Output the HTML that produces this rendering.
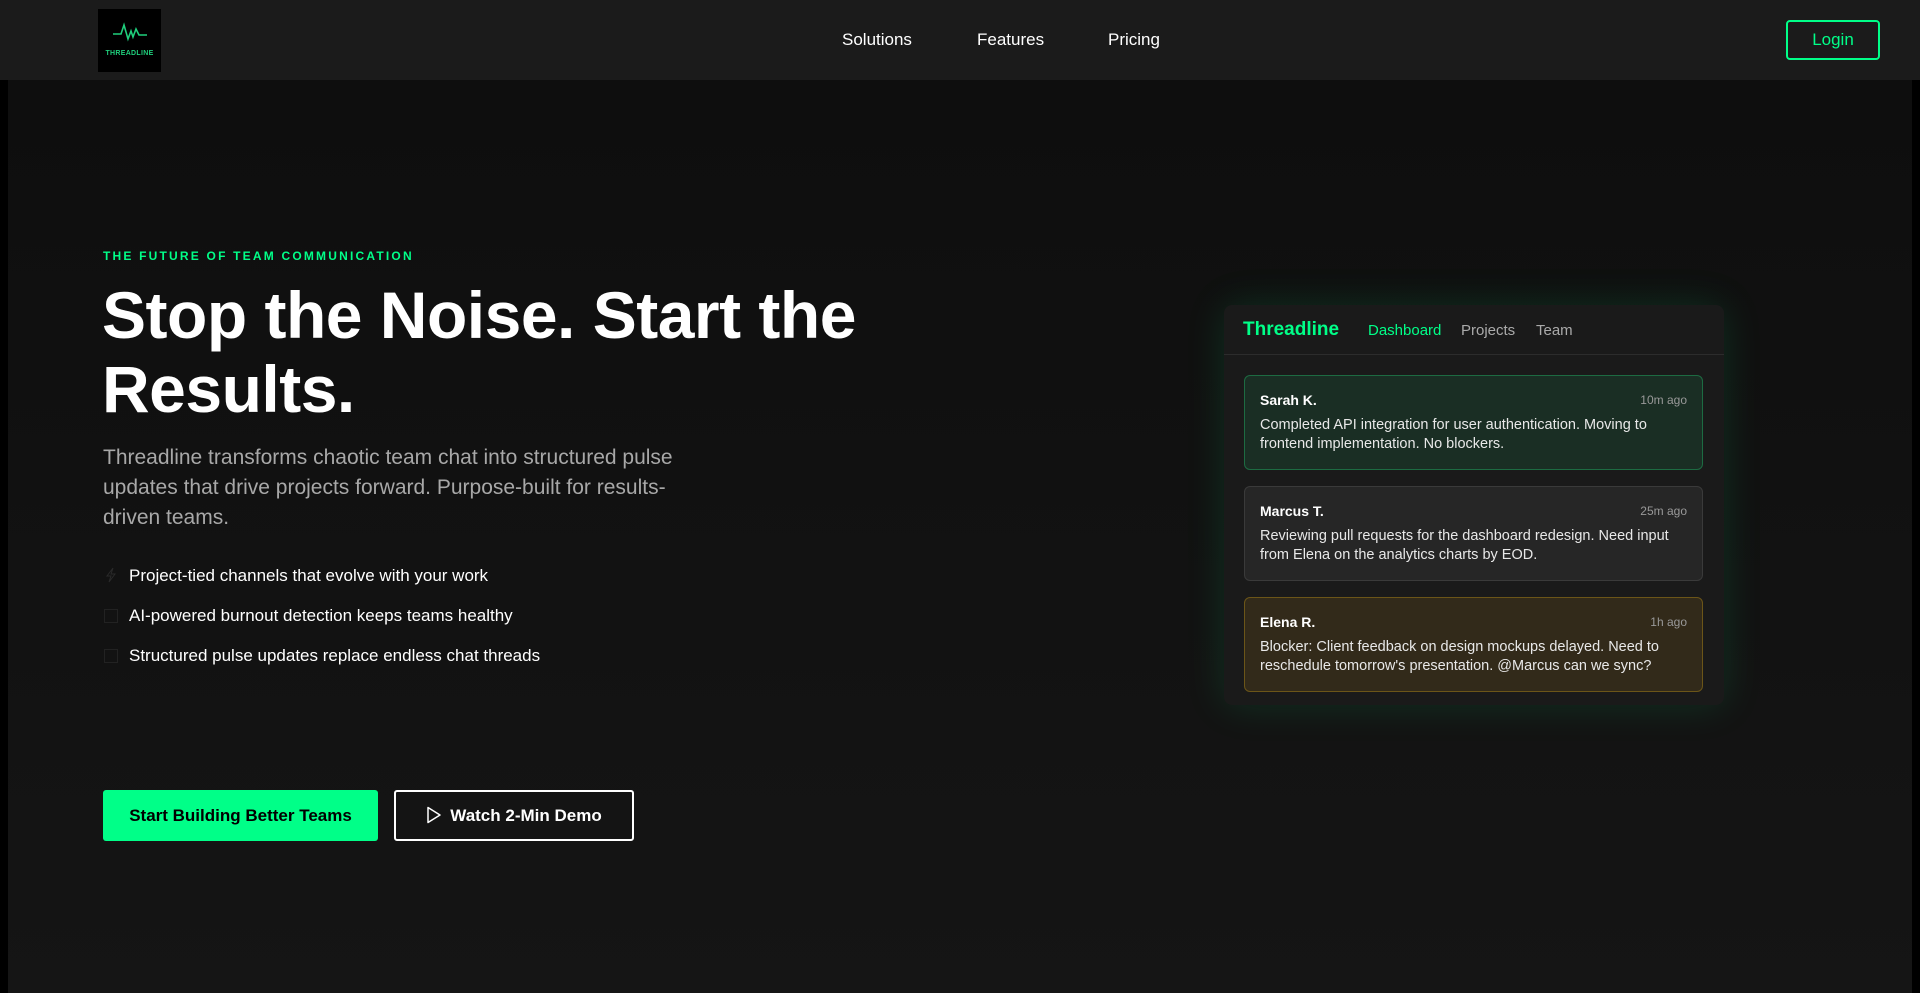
<!DOCTYPE html>
<html><head><meta charset="utf-8"><style>
*{margin:0;padding:0;box-sizing:border-box}
body{width:1920px;height:993px;overflow:hidden;background:#000;font-family:"Liberation Sans",sans-serif;color:#fff;position:relative}
.nav{position:absolute;left:0;top:0;width:1920px;height:80px;background:#1b1b1b}
.logo{position:absolute;left:98px;top:9px;width:63px;height:63px;background:#000}
.logo span{position:absolute;left:0;right:0;top:41px;text-align:center;font-size:7px;font-weight:bold;color:#1fcf7c;letter-spacing:.3px}
.nl{position:absolute;top:30px;font-size:17px;color:#fff}
.login{position:absolute;left:1786px;top:20px;width:94px;height:40px;border:2px solid #00ff88;border-radius:4px;color:#00ff88;font-size:17px;text-align:center;line-height:36px}
.hero{position:absolute;left:8px;top:80px;width:1904px;height:913px;background:linear-gradient(180deg,#0e0e0e,#151515)}
.eb{position:absolute;left:103px;top:249px;font-size:12px;font-weight:bold;letter-spacing:2.2px;color:#00ff88}
h1{position:absolute;left:102px;top:278px;font-size:66px;line-height:74px;font-weight:bold;width:800px;letter-spacing:-.5px}
.p{position:absolute;left:103px;top:443px;width:590px;font-size:21px;line-height:30px;color:#a8a8a8}
.b{position:absolute;left:104px;font-size:17px;color:#fff}
.b i{display:inline-block;width:14px;height:14px;border:1px solid #222;margin-right:11px;vertical-align:-2px}
.btn1{position:absolute;left:103px;top:790px;width:275px;height:51px;background:#00ff88;border-radius:3px;color:#000;font-weight:bold;font-size:17px;text-align:center;line-height:51px}
.btn2{position:absolute;left:394px;top:790px;width:240px;height:51px;border:2px solid #fff;border-radius:3px;font-weight:bold;font-size:17px;text-align:center;line-height:47px}
.card{position:absolute;left:1224px;top:305px;width:500px;height:400px;background:#1a1a1a;border-radius:8px;box-shadow:0 0 40px rgba(0,255,136,.13)}
.ch{height:50px;border-bottom:1px solid #2c2c2c;position:relative}
.ch b{position:absolute;left:19px;top:14px;font-size:19px;color:#00ff88}
.ch span{position:absolute;top:17px;font-size:15px;color:#aaa}
.m{position:absolute;left:20px;width:459px;height:95px;border-radius:6px;border:1px solid;padding:16px 15px}
.m .n{font-size:14px;font-weight:bold}
.m .t{position:absolute;right:15px;top:17px;font-size:12px;color:#999}
.m p{margin-top:8px;font-size:14.5px;line-height:19px;color:#e8e8e8}
</style></head><body>
<div class="nav">
<div class="logo"><svg width="63" height="40" viewBox="0 0 63 40"><path d="M15 25h8l3-9 4 14 3-8 2 6 3-8 3 6h8" fill="none" stroke="#1fcf7c" stroke-width="1.6"/></svg><span>THREADLINE</span></div>
<div class="nl" style="left:842px">Solutions</div>
<div class="nl" style="left:977px">Features</div>
<div class="nl" style="left:1108px">Pricing</div>
<div class="login">Login</div>
</div>
<div class="hero"></div>
<div class="eb">THE FUTURE OF TEAM COMMUNICATION</div>
<h1>Stop the Noise. Start the Results.</h1>
<div class="p">Threadline transforms chaotic team chat into structured pulse updates that drive projects forward. Purpose-built for results-driven teams.</div>
<div class="b" style="top:566px"><svg width="14" height="16" viewBox="0 0 14 16" style="vertical-align:-2px;margin-right:11px"><path d="M9 1L3 9h4l-2 6 6-8H7z" fill="none" stroke="#2a2a2a" stroke-width="1"/></svg>Project-tied channels that evolve with your work</div>
<div class="b" style="top:606px"><i></i>AI-powered burnout detection keeps teams healthy</div>
<div class="b" style="top:646px"><i></i>Structured pulse updates replace endless chat threads</div>
<div class="btn1">Start Building Better Teams</div>
<div class="btn2"><svg width="16" height="18" viewBox="0 0 16 18" style="vertical-align:-3px;margin-right:8px"><path d="M2 1.5v15l12-7.5z" fill="none" stroke="#fff" stroke-width="1.5" stroke-linejoin="round"/></svg>Watch 2-Min Demo</div>
<div class="card">
<div class="ch"><b>Threadline</b><span style="left:144px;color:#00ff88">Dashboard</span><span style="left:237px">Projects</span><span style="left:312px">Team</span></div>
<div class="m" style="top:70px;background:#1a2e24;border-color:#1d6b42"><div class="n">Sarah K.</div><div class="t">10m ago</div><p>Completed API integration for user authentication. Moving to frontend implementation. No blockers.</p></div>
<div class="m" style="top:181px;background:#262626;border-color:#3a3a3a"><div class="n">Marcus T.</div><div class="t">25m ago</div><p>Reviewing pull requests for the dashboard redesign. Need input from Elena on the analytics charts by EOD.</p></div>
<div class="m" style="top:292px;background:#322a1a;border-color:#6b5518"><div class="n">Elena R.</div><div class="t">1h ago</div><p>Blocker: Client feedback on design mockups delayed. Need to reschedule tomorrow's presentation. @Marcus can we sync?</p></div>
</div>
</body></html>
